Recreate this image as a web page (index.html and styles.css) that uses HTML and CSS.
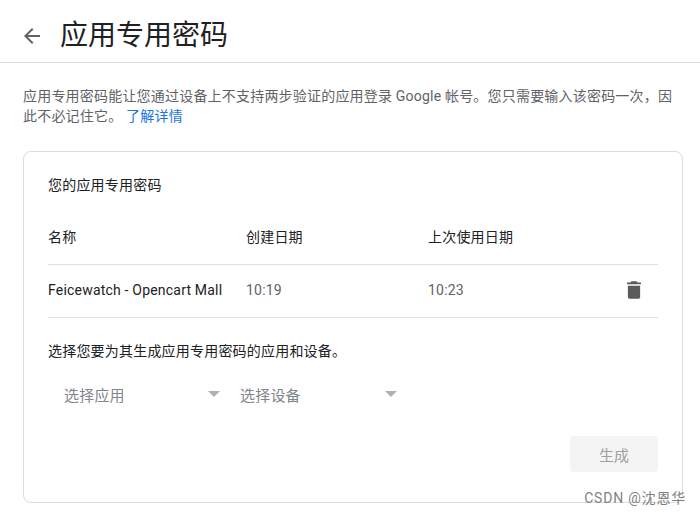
FILE: index.html
```html
<!DOCTYPE html>
<html>

<head>
    <link rel="stylesheet" href="styles.css">
</head>

<body>
    <div class="header">
        <svg class="back-icon" viewBox="0 0 24 24">
            <path d="M20 11H7.83l5.59-5.59L12 4l-8 8 8 8 1.41-1.41L7.83 13H20v-2z"></path>
        </svg>
        <p class="title">应用专用密码</p>
    </div>

    <p class="intro">
        应用专用密码能让您通过设备上不支持两步验证的应用登录 Google 帐号。您只需要输入该密码一次，因此不必记住它。
        <a class="learn-more">了解详情</a>
    </p>

    <div class="card">
        <p class="card-title">您的应用专用密码</p>

        <div class="row head-row">
            <span class="col-name">名称</span>
            <span class="col-created">创建日期</span>
            <span class="col-used">上次使用日期</span>
        </div>

        <div class="row item-row">
            <span class="col-name">Feicewatch - Opencart Mall</span>
            <span class="col-created muted">10:19</span>
            <span class="col-used muted">10:23</span>
            <svg class="delete-icon" viewBox="0 0 16 20">
                <path d="M5 0h6l1 1.500h4v2H0v-2h4z"></path>
                <path d="M1 5h14v13c0 1.100-.9 2-2 2H3c-1.100 0-2-.9-2-2z"></path>
            </svg>
        </div>

        <p class="generate-text">选择您要为其生成应用专用密码的应用和设备。</p>

        <div class="selects">
            <div class="select select-app">
                <span>选择应用</span>
                <span class="arrow"></span>
            </div>
            <div class="select select-device">
                <span>选择设备</span>
                <span class="arrow"></span>
            </div>
        </div>

        <div class="actions">
            <button class="generate-button">生成</button>
        </div>
    </div>

    <span class="watermark">CSDN @沈恩华</span>
</body>

</html>
```

FILE: styles.css
```css
body {
    margin: 0;
    height: 514px;
    overflow: hidden;
    position: relative;
    background-color: white;
    color: rgb(32, 33, 36);
    font-family: Roboto, "Noto Sans CJK SC", sans-serif;
    font-size: 14px;
    letter-spacing: 0.2px;
}

p {
    margin: 0;
}

.header {
    display: flex;
    align-items: center;
    height: 63px;
    padding-left: 20px;
    padding-top: 9px;
    box-sizing: border-box;
    border-bottom: 1px solid rgb(218, 220, 224);
}

.back-icon {
    width: 24px;
    height: 24px;
    fill: rgb(95, 99, 104);
    margin-right: 16px;
}

.title {
    font-size: 28px;
    line-height: 36px;
    letter-spacing: 0;
}

.intro {
    margin: 23px 23px 0 23px;
    width: 654px;
    line-height: 20px;
    color: rgb(95, 99, 104);
}

.learn-more {
    color: rgb(26, 115, 232);
}

.card {
    margin: 25px 17px 0 23px;
    height: 352px;
    box-sizing: border-box;
    padding: 23px 24px 0 24px;
    border: 1px solid rgb(218, 220, 224);
    border-radius: 8px;
}

.card-title {
    line-height: 20px;
}

.row {
    display: flex;
    align-items: center;
    border-bottom: 1px solid rgb(224, 224, 224);
}

.head-row {
    height: 70px;
    padding-top: 12px;
    box-sizing: border-box;
}

.item-row {
    height: 53px;
    padding-bottom: 2px;
    box-sizing: border-box;
}

.col-name {
    width: 198px;
}

.col-created {
    width: 182px;
}

.col-used {
    width: 199px;
}

.muted {
    color: rgb(95, 99, 104);
}

.delete-icon {
    width: 14px;
    height: 18px;
    fill: rgb(90, 90, 90);
}

.generate-text {
    margin-top: 23px;
    line-height: 20px;
}

.selects {
    display: flex;
    margin-top: 18px;
}

.select {
    display: flex;
    justify-content: space-between;
    align-items: center;
    height: 30px;
    padding-left: 16px;
    box-sizing: border-box;
    color: rgb(128, 134, 139);
    font-size: 15px;
}

.select-app {
    width: 172px;
}

.select-device {
    width: 157px;
    margin-left: 20px;
    padding-left: 0;
}

.arrow {
    width: 0;
    height: 0;
    border-left: 6px solid transparent;
    border-right: 6px solid transparent;
    border-top: 6px solid rgb(176, 176, 176);
}

.actions {
    display: flex;
    justify-content: flex-end;
    margin-top: 27px;
}

.generate-button {
    width: 88px;
    height: 36px;
    border: none;
    border-radius: 4px;
    background-color: rgb(244, 244, 244);
    color: rgb(160, 160, 160);
    font-family: inherit;
    font-size: 15px;
}

.watermark {
    position: absolute;
    right: 14px;
    top: 488px;
    color: rgb(130, 130, 130);
    font-size: 14px;
    line-height: 20px;
    letter-spacing: 0.8px;
}
```
